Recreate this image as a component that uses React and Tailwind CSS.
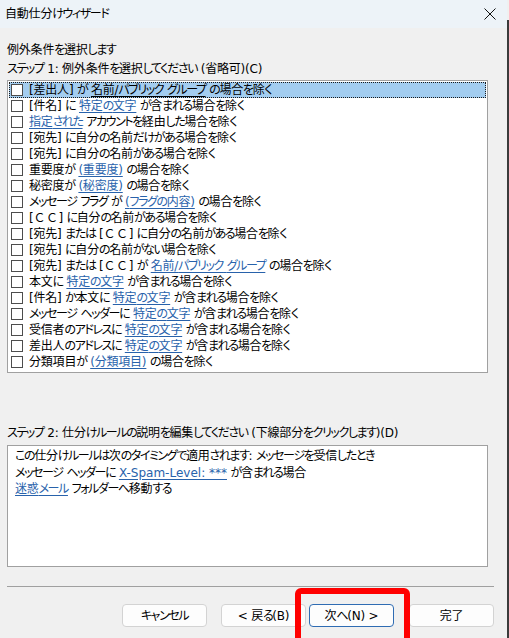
import React from 'react';

// each row: array of [text, kind]
const CONDITIONS = [
  [['[差出人] が '], ['名前/パブリック グループ', true], [' の場合を除く']],
  [['[件名] に '], ['特定の文字', true], [' が含まれる場合を除く']],
  [['指定された', true], [' アカウントを経由した場合を除く']],
  [['[宛先] に自分の名前だけがある場合を除く']],
  [['[宛先] に自分の名前がある場合を除く']],
  [['重要度が '], ['(重要度)', true], [' の場合を除く']],
  [['秘密度が '], ['(秘密度)', true], [' の場合を除く']],
  [['メッセージ フラグ が '], ['(フラグの内容)', true], [' の場合を除く']],
  [['['], ['ＣＣ', 'cc'], ['] に自分の名前がある場合を除く']],
  [['[宛先] または ['], ['ＣＣ', 'cc'], ['] に自分の名前がある場合を除く']],
  [['[宛先] に自分の名前がない場合を除く']],
  [['[宛先] または ['], ['ＣＣ', 'cc'], ['] が '], ['名前/パブリック グループ', true], [' の場合を除く']],
  [['本文に '], ['特定の文字', true], [' が含まれる場合を除く']],
  [['[件名] か本文に '], ['特定の文字', true], [' が含まれる場合を除く']],
  [['メッセージ ヘッダーに '], ['特定の文字', true], [' が含まれる場合を除く']],
  [['受信者のアドレスに '], ['特定の文字', true], [' が含まれる場合を除く']],
  [['差出人のアドレスに '], ['特定の文字', true], [' が含まれる場合を除く']],
  [['分類項目が '], ['(分類項目)', true], [' の場合を除く']],
];

const KANA_SPLIT = /([\u3040-\u30ff]+)/;
const KANA_ONLY = /^[\u3040-\u30ff]+$/;

// かなは詰めて表示 (Meiryo UI 風)
function T({ s }) {
  return s.split(KANA_SPLIT).map((p, i) =>
    KANA_ONLY.test(p) ? <span key={i} className="tracking-[-1.4px]">{p}</span> : <React.Fragment key={i}>{p}</React.Fragment>
  );
}

function Link({ children, selected }) {
  return (
    <span className={selected ? 'underline underline-offset-2 text-black' : 'underline underline-offset-2 text-[#2862ab]'}>
      <T s={children} />
    </span>
  );
}

function ConditionRow({ parts, selected }) {
  return (
    <div
      className={
        selected
          ? 'h-[16px] flex items-center bg-[#a3cdf0] border border-dotted border-[#1a1a1a] pl-[1px]'
          : 'h-[16px] flex items-center border border-transparent pl-[1px]'
      }
    >
      <span className="w-[12px] h-[12px] border border-[#4d4d4d] bg-white shrink-0" />
      <span className="ml-[6px] whitespace-pre leading-[16px]">
        {parts.map(([text, kind], i) => {
          if (kind === true) return <Link key={i} selected={selected}>{text}</Link>;
          if (kind === 'cc') return <span key={i} className="[font-feature-settings:normal] tracking-[0.5px]">{text}</span>;
          return <T key={i} s={text} />;
        })}
      </span>
    </div>
  );
}

function WizardButton({ children, primary, className = '' }) {
  return (
    <button
      className={
        'h-[23px] w-[85px] rounded-[4px] text-[12px] leading-none flex items-center justify-center ' +
        (primary ? 'border border-[#2f6cb3] bg-[#fdfdfd] ' : 'border border-[#d3d3d3] bg-[#fdfdfd] ') +
        className
      }
    >
      <T s={children} />
    </button>
  );
}

export default function App() {
  return (
    <div className="w-[509px] h-[638px] flex bg-[#f0f0f0] overflow-hidden relative font-['DejaVu_Sans','Noto_Sans_CJK_JP',sans-serif] [font-feature-settings:'palt'] tracking-[-0.2px] text-[12px] text-black">
      <div className="w-[507px] flex flex-col">
        {/* タイトルバー */}
        <div className="h-[28px] bg-[#edf3f8] flex items-center justify-between pl-[5px] pr-[11px]">
          <span className="leading-[16px]"><T s="自動仕分けウィザード" /></span>
          <svg width="12" height="12" viewBox="0 0 12 12">
            <path d="M0.5 0.5 L11.5 11.5 M11.5 0.5 L0.5 11.5" stroke="#111" strokeWidth="1" fill="none" />
          </svg>
        </div>

        <div className="px-[7px] pt-[14px]">
          <div className="h-[16px] leading-[16px]"><T s="例外条件を選択します" /></div>
          <div className="h-[16px] leading-[16px] mt-[3px]"><T s="ステップ 1: 例外条件を選択してください (省略可)(C)" /></div>

          {/* 条件リスト */}
          <div className="mt-[3px] w-[481px] h-[293px] border border-[#a0a0a0] bg-white p-[1px] pt-[1px]">
            {CONDITIONS.map((parts, i) => (
              <ConditionRow key={i} parts={parts} selected={i === 0} />
            ))}
          </div>

          <div className="mt-[52px] h-[16px] leading-[16px]">
            <T s="ステップ 2: 仕分けルールの説明を編集してください (下線部分をクリックします)(D)" />
          </div>

          {/* ルールの説明 */}
          <div className="mt-[4px] w-[481px] h-[122px] border border-[#a0a0a0] bg-white px-[7px] pt-[2px]">
            <div className="leading-[16.5px]"><T s="この仕分けルールは次のタイミングで適用されます: メッセージを受信したとき" /></div>
            <div className="leading-[16.5px] whitespace-pre">
              <T s="メッセージ ヘッダーに " />
              <span className="underline underline-offset-2 text-[#2862ab] tracking-normal">X-Spam-Level: ***</span>
              <T s=" が含まれる場合" />
            </div>
            <div className="leading-[16.5px] whitespace-pre">
              <Link>迷惑メール</Link>
              <T s=" フォルダーへ移動する" />
            </div>
          </div>

          <div className="mt-[19px] w-[487px] h-px bg-[#a0a0a0]" />

          {/* ボタン */}
          <div className="mt-[17px] w-[487px] flex">
            <WizardButton className="ml-[115px]">キャンセル</WizardButton>
            <WizardButton className="ml-[14px]">{'< 戻る(B)'}</WizardButton>
            <WizardButton primary className="ml-[3px]">{'次へ(N) >'}</WizardButton>
            <WizardButton className="ml-[15px]">完了</WizardButton>
          </div>
        </div>
      </div>

      {/* ウィンドウの右端 */}
      <div className="w-[2px] flex flex-col">
        <div className="h-[20px]" />
        <div className="flex-1 bg-[#3b3b3b]" />
      </div>

      {/* 強調枠 */}
      <div className="absolute left-[295px] top-[588px] w-[115px] h-[70px] border-[6px] border-[#ff0000] rounded-[6px]" />
    </div>
  );
}
